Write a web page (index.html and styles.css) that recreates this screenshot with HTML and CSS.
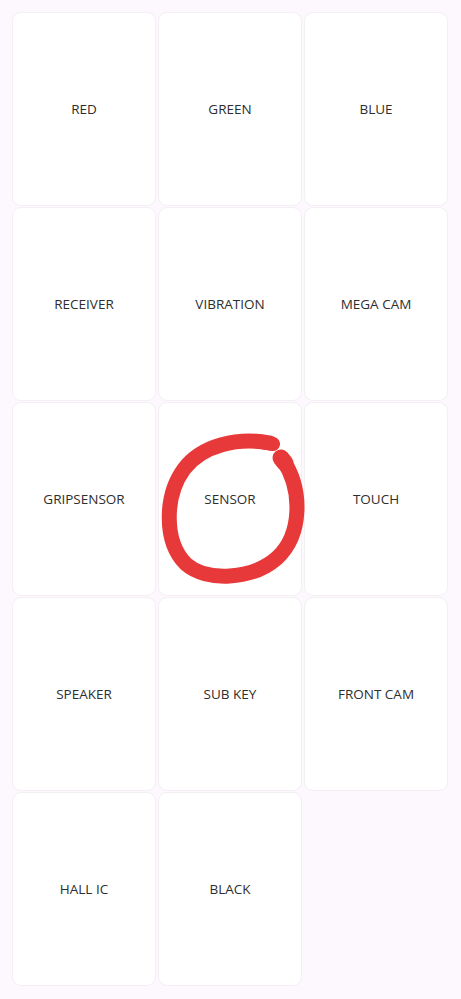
FILE: index.html
```html
<!DOCTYPE html>
<html>
<head>
<meta charset="utf-8">
<link rel="stylesheet" href="styles.css">
</head>
<body>
<div class="page">
  <div class="grid">
    <div class="card">RED</div>
    <div class="card">GREEN</div>
    <div class="card">BLUE</div>
    <div class="card">RECEIVER</div>
    <div class="card">VIBRATION</div>
    <div class="card">MEGA CAM</div>
    <div class="card">GRIPSENSOR</div>
    <div class="card">SENSOR</div>
    <div class="card">TOUCH</div>
    <div class="card">SPEAKER</div>
    <div class="card">SUB KEY</div>
    <div class="card">FRONT CAM</div>
    <div class="card">HALL IC</div>
    <div class="card">BLACK</div>
  </div>
  <svg class="scribble" viewBox="0 0 461 999" width="461" height="999">
    <path d="M 270 443 C 238 437, 202 445, 184 469 C 165 495, 163 541, 186 564 C 206 582, 252 580, 277 558 C 302 535, 303 490, 283 460" fill="none" stroke="#e8393a" stroke-width="15" stroke-linecap="round" stroke-linejoin="round"/>
    <path d="M 262 442 L 273 444" fill="none" stroke="#e8393a" stroke-width="14" stroke-linecap="round"/>
    <path d="M 281 458 L 285 463" fill="none" stroke="#e8393a" stroke-width="17" stroke-linecap="round"/>
  </svg>
</div>
</body>
</html>
```

FILE: styles.css
```css
html, body {
  margin: 0;
  padding: 0;
  background: #fdf8fd;
}
.page {
  position: relative;
  width: 461px;
  height: 999px;
}
.grid {
  display: grid;
  grid-template-columns: repeat(3, 144px);
  grid-auto-rows: 194px;
  column-gap: 2px;
  row-gap: 1px;
  padding: 12px 0 0 12px;
}
.card {
  background: #ffffff;
  border: 1px solid #f3eff3;
  border-radius: 9px;
  display: flex;
  align-items: center;
  justify-content: center;
  font-family: "Open Sans", "Noto Sans", sans-serif;
  font-size: 13.5px;
  font-weight: 500;
  color: #2e2e2e;
  box-sizing: border-box;
}
.scribble {
  position: absolute;
  left: 0;
  top: 0;
  pointer-events: none;
}
```
